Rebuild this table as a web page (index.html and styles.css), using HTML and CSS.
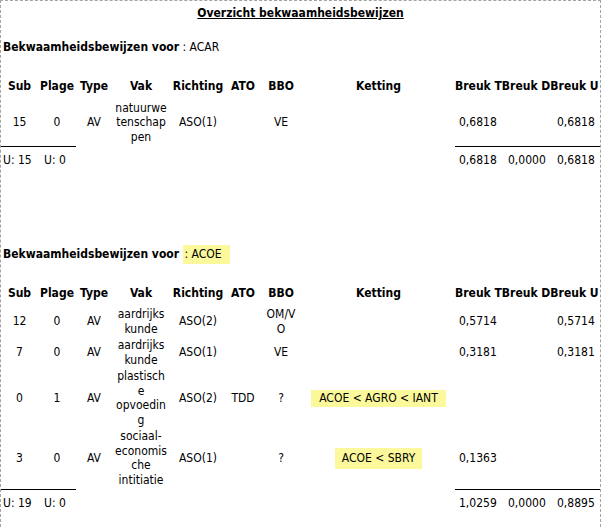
FILE: index.html
```html
<!DOCTYPE html>
<html>
<head>
<meta charset="utf-8">
<link rel="stylesheet" href="styles.css">
</head>
<body>
<div class="page">
  <h1 class="title">Overzicht bekwaamheidsbewijzen</h1>

  <section class="block block-first">
    <p class="heading"><b>Bekwaamheidsbewijzen voor</b> <span class="code">: ACAR</span></p>
    <div class="grid">
      <div class="th">Sub</div>
      <div class="th">Plage</div>
      <div class="th">Type</div>
      <div class="th">Vak</div>
      <div class="th">Richting</div>
      <div class="th">ATO</div>
      <div class="th">BBO</div>
      <div class="th">Ketting</div>
      <div class="th th-breuk">Breuk TBreuk DBreuk U</div>

      <div class="td">15</div>
      <div class="td">0</div>
      <div class="td">AV</div>
      <div class="td vak">natuurwetenschappen</div>
      <div class="td">ASO(1)</div>
      <div class="td"></div>
      <div class="td bbo">VE</div>
      <div class="td"></div>
      <div class="td num">0,6818</div>
      <div class="td num"></div>
      <div class="td num">0,6818</div>

      <div class="tf tf-line tf-sub">U: 15</div>
      <div class="tf tf-line tf-plage">U: 0</div>
      <div class="tf tf-skip"></div>
      <div class="tf tf-line num">0,6818</div>
      <div class="tf tf-line num">0,0000</div>
      <div class="tf tf-line num">0,6818</div>
    </div>
  </section>

  <section class="block block-second">
    <p class="heading"><b>Bekwaamheidsbewijzen voor</b> <span class="code mark">: ACOE</span></p>
    <div class="grid">
      <div class="th">Sub</div>
      <div class="th">Plage</div>
      <div class="th">Type</div>
      <div class="th">Vak</div>
      <div class="th">Richting</div>
      <div class="th">ATO</div>
      <div class="th">BBO</div>
      <div class="th">Ketting</div>
      <div class="th th-breuk">Breuk TBreuk DBreuk U</div>

      <div class="td">12</div>
      <div class="td">0</div>
      <div class="td">AV</div>
      <div class="td vak">aardrijkskunde</div>
      <div class="td">ASO(2)</div>
      <div class="td"></div>
      <div class="td bbo">OM/VO</div>
      <div class="td"></div>
      <div class="td num">0,5714</div>
      <div class="td num"></div>
      <div class="td num">0,5714</div>

      <div class="td">7</div>
      <div class="td">0</div>
      <div class="td">AV</div>
      <div class="td vak">aardrijkskunde</div>
      <div class="td">ASO(1)</div>
      <div class="td"></div>
      <div class="td bbo">VE</div>
      <div class="td"></div>
      <div class="td num">0,3181</div>
      <div class="td num"></div>
      <div class="td num">0,3181</div>

      <div class="td">0</div>
      <div class="td">1</div>
      <div class="td">AV</div>
      <div class="td vak">plastische opvoeding</div>
      <div class="td">ASO(2)</div>
      <div class="td">TDD</div>
      <div class="td bbo">?</div>
      <div class="td"><span class="chain">ACOE &lt; AGRO &lt; IANT</span></div>
      <div class="td num"></div>
      <div class="td num"></div>
      <div class="td num"></div>

      <div class="td">3</div>
      <div class="td">0</div>
      <div class="td">AV</div>
      <div class="td vak">sociaal-economische intitiatie</div>
      <div class="td">ASO(1)</div>
      <div class="td"></div>
      <div class="td bbo">?</div>
      <div class="td"><span class="chain chain-tall">ACOE &lt; SBRY</span></div>
      <div class="td num">0,1363</div>
      <div class="td num"></div>
      <div class="td num"></div>

      <div class="tf tf-line tf-sub">U: 19</div>
      <div class="tf tf-line tf-plage">U: 0</div>
      <div class="tf tf-skip"></div>
      <div class="tf tf-line num">1,0259</div>
      <div class="tf tf-line num">0,0000</div>
      <div class="tf tf-line num">0,8895</div>
    </div>
  </section>
</div>
</body>
</html>
```

FILE: styles.css
```css
html, body {
  margin: 0;
  padding: 0;
  background: #ffffff;
  overflow: hidden;
}

body {
  font-family: "DejaVu Sans Condensed", "DejaVu Sans", sans-serif;
  font-size: 12px;
  line-height: 14.5px;
  color: #000000;
}

.page {
  width: 599px;
  height: 526px;
  border: 1px dashed #a3a3a3;
  border-bottom: none;
  overflow: hidden;
}

.title {
  margin: 5px 0 0 0;
  font-size: 12px;
  line-height: 15px;
  font-weight: bold;
  text-align: center;
  text-decoration: underline;
}

.heading {
  margin: 0 0 24px 0;
  padding-left: 2px;
  line-height: 15px;
}

.block-first {
  margin-top: 19px;
}

.block-second {
  margin-top: 79px;
}

.mark {
  background: #fbf99b;
  padding: 2px 8px 3px 2px;
}

.grid {
  display: grid;
  grid-template-columns: 37px 38px 36px 58px 56px 34px 42px 153px 49px 49px 47px;
  row-gap: 2px;
}

.th {
  font-weight: bold;
  text-align: center;
  white-space: nowrap;
  padding-bottom: 5px;
}

.th-breuk {
  grid-column: 9 / 12;
  text-align: left;
}

.td {
  display: flex;
  align-items: center;
  justify-content: center;
  text-align: center;
  overflow-wrap: anywhere;
  min-width: 0;
}

.vak {
  padding: 0 3px;
}

.bbo {
  padding: 0 6px;
}

.td.num,
.tf.num {
  justify-content: flex-start;
  text-align: left;
  padding-left: 4px;
}

.chain {
  display: inline-block;
  background: #fbf99b;
  padding: 1px 8px;
  line-height: 15px;
  white-space: nowrap;
}

.chain-tall {
  padding: 3px 7px;
}

.tf {
  padding-top: 6px;
  display: flex;
}

.tf-line {
  border-top: 1px solid #000000;
}

.tf-sub {
  padding-left: 2px;
}

.tf-plage {
  padding-left: 6px;
}

.tf-skip {
  grid-column: 3 / 9;
}
```
